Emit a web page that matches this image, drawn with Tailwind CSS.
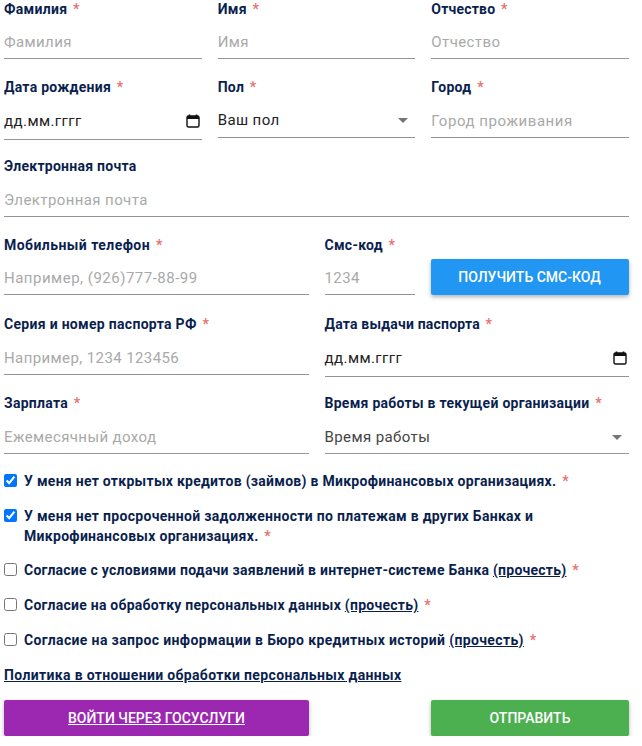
<!DOCTYPE html>
<html lang="ru">
<head>
  <meta charset="UTF-8" />
  <title>Заявка</title>
  <script src="https://cdn.jsdelivr.net/npm/@tailwindcss/browser@4"></script>
</head>
<body class="bg-white font-['Roboto',sans-serif] text-[#0b1f4f]">
  <form class="w-[625px] ml-1 flex flex-col">
    <!-- ФИО -->
    <div class="grid grid-cols-3 gap-x-4 h-[78px] -mt-[1px]">
      <div>
        <label class="block h-5 leading-5 text-sm font-bold tracking-[0.3px]">Фамилия <span class="text-[#e57373] ml-[2px]">*</span></label>
        <input placeholder="Фамилия" class="block w-full mt-[12px] h-[28px] pb-[6px] border-b border-[#949494] text-[15px] tracking-[0.4px] outline-none placeholder:text-[#a9a9a9]" />
      </div>
      <div>
        <label class="block h-5 leading-5 text-sm font-bold tracking-[0.3px]">Имя <span class="text-[#e57373] ml-[2px]">*</span></label>
        <input placeholder="Имя" class="block w-full mt-[12px] h-[28px] pb-[6px] border-b border-[#949494] text-[15px] tracking-[0.4px] outline-none placeholder:text-[#a9a9a9]" />
      </div>
      <div>
        <label class="block h-5 leading-5 text-sm font-bold tracking-[0.2px]">Отчество <span class="text-[#e57373] ml-[2px]">*</span></label>
        <input placeholder="Отчество" class="block w-full mt-[12px] h-[28px] pb-[6px] border-b border-[#949494] text-[15px] tracking-[0.4px] outline-none placeholder:text-[#a9a9a9]" />
      </div>
    </div>

    <!-- Дата, пол, город -->
    <div class="grid grid-cols-3 gap-x-4 h-[79px]">
      <div>
        <label class="block h-5 leading-5 text-sm font-bold tracking-[0.27px]">Дата рождения <span class="text-[#e57373] ml-[2px]">*</span></label>
        <div class="flex items-center justify-between mt-[13px] h-[30px] pb-[7px] border-b border-[#949494] text-[15px] tracking-[0.4px] text-[#222]">
          <span>дд.мм.гггг</span>
          <svg class="w-[14px] h-[14px] mr-[2px]" viewBox="0 0 14 14" fill="none"><path d="M3.5 0.5v2M10.5 0.5v2" stroke="#111" stroke-width="1.6"/><rect x="1" y="2" width="12" height="11" rx="1.5" stroke="#111" stroke-width="1.4"/><rect x="1" y="2" width="12" height="3" fill="#111"/></svg>
        </div>
      </div>
      <div>
        <label class="block h-5 leading-5 text-sm font-bold tracking-[0.27px]">Пол <span class="text-[#e57373] ml-[2px]">*</span></label>
        <div class="flex items-center justify-between mt-[13px] h-[28px] pb-[6px] border-b border-[#949494] text-[15px] tracking-[0.4px] text-[#222]">
          <span>Ваш пол</span>
          <svg class="w-[10px] h-[5px] mr-[7px]" viewBox="0 0 10 5"><path d="M0 0h10L5 5z" fill="#757575"/></svg>
        </div>
      </div>
      <div>
        <label class="block h-5 leading-5 text-sm font-bold tracking-[0.27px]">Город <span class="text-[#e57373] ml-[2px]">*</span></label>
        <input placeholder="Город проживания" class="block w-full mt-[13px] h-[28px] pb-[6px] border-b border-[#949494] text-[15px] tracking-[0.55px] outline-none placeholder:text-[#a9a9a9]" />
      </div>
    </div>

    <!-- Почта -->
    <div class="h-[79px]">
      <label class="block h-5 leading-5 text-sm font-bold tracking-[0.27px]">Электронная почта</label>
      <input placeholder="Электронная почта" class="block w-full mt-[13px] h-[28px] pb-[6px] border-b border-[#949494] text-[15px] tracking-[0.4px] outline-none placeholder:text-[#a9a9a9]" />
    </div>

    <!-- Телефон -->
    <div class="grid grid-cols-2 gap-x-4 h-[79px]">
      <div>
        <label class="block h-5 leading-5 text-sm font-bold tracking-[0.45px]">Мобильный телефон <span class="text-[#e57373] ml-[2px]">*</span></label>
        <input placeholder="Например, (926)777-88-99" class="block w-full mt-[12px] h-[28px] pb-[5px] border-b border-[#949494] text-[15px] tracking-[0.5px] outline-none placeholder:text-[#a9a9a9]" />
      </div>
      <div class="flex gap-x-4">
        <div class="w-[90px]">
          <label class="block h-5 leading-5 text-sm font-bold tracking-[0.27px]">Смс-код <span class="text-[#e57373] ml-[2px]">*</span></label>
          <input placeholder="1234" class="block w-full mt-[12px] h-[28px] pb-[5px] border-b border-[#949494] text-[15px] tracking-[0.4px] outline-none placeholder:text-[#a9a9a9]" />
        </div>
        <button type="button" class="w-[198px] h-9 mt-[24px] rounded-[2px] bg-[#2196f3] text-white text-sm font-medium uppercase shadow-[0_2px_4px_rgba(0,0,0,0.3)]">Получить смс-код</button>
      </div>
    </div>

    <!-- Паспорт -->
    <div class="grid grid-cols-2 gap-x-4 h-[79px]">
      <div>
        <label class="block h-5 leading-5 text-sm font-bold tracking-[0.3px]">Серия и номер паспорта РФ <span class="text-[#e57373] ml-[2px]">*</span></label>
        <input placeholder="Например, 1234 123456" class="block w-full mt-[13px] h-[28px] pb-[6px] border-b border-[#949494] text-[15px] tracking-[0.4px] outline-none placeholder:text-[#a9a9a9]" />
      </div>
      <div>
        <label class="block h-5 leading-5 text-sm font-bold tracking-[0.2px]">Дата выдачи паспорта <span class="text-[#e57373] ml-[2px]">*</span></label>
        <div class="flex items-center justify-between mt-[13px] h-[30px] pb-[7px] border-b border-[#949494] text-[15px] tracking-[0.4px] text-[#222]">
          <span>дд.мм.гггг</span>
          <svg class="w-[14px] h-[14px] mr-[2px]" viewBox="0 0 14 14" fill="none"><path d="M3.5 0.5v2M10.5 0.5v2" stroke="#111" stroke-width="1.6"/><rect x="1" y="2" width="12" height="11" rx="1.5" stroke="#111" stroke-width="1.4"/><rect x="1" y="2" width="12" height="3" fill="#111"/></svg>
        </div>
      </div>
    </div>

    <!-- Зарплата -->
    <div class="grid grid-cols-2 gap-x-4 h-[79px]">
      <div>
        <label class="block h-5 leading-5 text-sm font-bold tracking-[0.27px]">Зарплата <span class="text-[#e57373] ml-[2px]">*</span></label>
        <input placeholder="Ежемесячный доход" class="block w-full mt-[13px] h-[28px] pb-[6px] border-b border-[#949494] text-[15px] tracking-[0.4px] outline-none placeholder:text-[#a9a9a9]" />
      </div>
      <div>
        <label class="block h-5 leading-5 text-sm font-bold tracking-[0.27px]">Время работы в текущей организации <span class="text-[#e57373] ml-[2px]">*</span></label>
        <div class="flex items-center justify-between mt-[13px] h-[28px] pb-[5px] border-b border-[#949494] text-[15px] tracking-[0.4px] text-[#444]">
          <span>Время работы</span>
          <svg class="w-[10px] h-[5px] mr-[7px]" viewBox="0 0 10 5"><path d="M0 0h10L5 5z" fill="#757575"/></svg>
        </div>
      </div>
    </div>

    <!-- Согласия -->
    <div class="flex flex-col text-sm font-bold leading-5 -mt-[1px]">
      <label class="flex items-start gap-[7px] mb-[15px] tracking-[0.28px]"><input type="checkbox" checked class="mt-[3px] w-[13px] h-[13px] shrink-0" /><span>У меня нет открытых кредитов (займов) в Микрофинансовых организациях. <span class="text-[#e57373] ml-[2px]">*</span></span></label>
      <label class="flex items-start gap-[7px] mb-[14px] tracking-[0.3px]"><input type="checkbox" checked class="mt-[3px] w-[13px] h-[13px] shrink-0" /><span>У меня нет просроченной задолженности по платежам в других Банках и Микрофинансовых организациях. <span class="text-[#e57373] ml-[2px]">*</span></span></label>
      <label class="flex items-start gap-[7px] mb-[15px] tracking-[0.24px]"><input type="checkbox" class="mt-[3px] w-[13px] h-[13px] shrink-0" /><span>Согласие с условиями подачи заявлений в интернет-системе Банка <a class="underline">(прочесть)</a> <span class="text-[#e57373] ml-[2px]">*</span></span></label>
      <label class="flex items-start gap-[7px] mb-[15px] tracking-[0.26px]"><input type="checkbox" class="mt-[3px] w-[13px] h-[13px] shrink-0" /><span>Согласие на обработку персональных данных <a class="underline">(прочесть)</a> <span class="text-[#e57373] ml-[2px]">*</span></span></label>
      <label class="flex items-start gap-[7px] mb-[15px] tracking-[0.36px]"><input type="checkbox" class="mt-[3px] w-[13px] h-[13px] shrink-0" /><span>Согласие на запрос информации в Бюро кредитных историй <a class="underline">(прочесть)</a> <span class="text-[#e57373] ml-[2px]">*</span></span></label>
      <a class="underline tracking-[0.35px]">Политика в отношении обработки персональных данных</a>
    </div>

    <!-- Кнопки -->
    <div class="flex justify-between mt-[15px]">
      <button type="button" class="w-[305px] h-9 rounded-[2px] bg-[#9c27b0] text-white text-sm font-medium uppercase underline shadow-[0_2px_4px_rgba(0,0,0,0.3)]">Войти через госуслуги</button>
      <button type="button" class="w-[198px] h-9 rounded-[2px] bg-[#4caf50] text-white text-sm font-medium uppercase shadow-[0_2px_4px_rgba(0,0,0,0.3)]">Отправить</button>
    </div>
  </form>
</body>
</html>
